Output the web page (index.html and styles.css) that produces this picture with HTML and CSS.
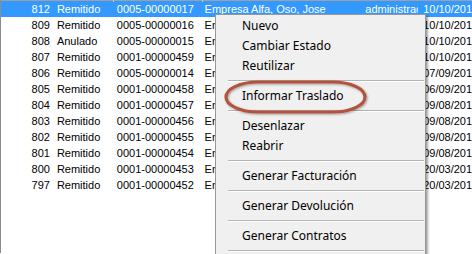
FILE: index.html
```html
<!DOCTYPE html>
<html>
<head>
    <title>Remitos</title>
    <link rel="stylesheet" href="styles.css">
</head>
<body>
    <div class="grid">
        <div class="grid-header">
            <span class="tick t1"></span>
            <span class="tick t2"></span>
        </div>

        <div class="row selected">
            <span class="c-num">812</span><span class="c-estado">Remitido</span><span class="c-nro">0005-00000017</span><span class="c-cliente">Empresa Alfa, Oso, Jose</span><span class="c-user">administrac</span><span class="c-fecha">10/10/201</span>
        </div>
        <div class="row">
            <span class="c-num">809</span><span class="c-estado">Remitido</span><span class="c-nro">0005-00000016</span><span class="c-cliente">Empresa Alfa, Oso, Jose</span><span class="c-user">administrac</span><span class="c-fecha">10/10/201</span>
        </div>
        <div class="row">
            <span class="c-num">808</span><span class="c-estado">Anulado</span><span class="c-nro">0005-00000015</span><span class="c-cliente">Empresa Alfa, Oso, Jose</span><span class="c-user">administrac</span><span class="c-fecha">10/10/201</span>
        </div>
        <div class="row">
            <span class="c-num">807</span><span class="c-estado">Remitido</span><span class="c-nro">0001-00000459</span><span class="c-cliente">Empresa Alfa, Oso, Jose</span><span class="c-user">administrac</span><span class="c-fecha">10/10/201</span>
        </div>
        <div class="row">
            <span class="c-num">806</span><span class="c-estado">Remitido</span><span class="c-nro">0005-00000014</span><span class="c-cliente">Empresa Alfa, Oso, Jose</span><span class="c-user">administrac</span><span class="c-fecha">07/09/201</span>
        </div>
        <div class="row">
            <span class="c-num">805</span><span class="c-estado">Remitido</span><span class="c-nro">0001-00000458</span><span class="c-cliente">Empresa Alfa, Oso, Jose</span><span class="c-user">administrac</span><span class="c-fecha">06/09/201</span>
        </div>
        <div class="row">
            <span class="c-num">804</span><span class="c-estado">Remitido</span><span class="c-nro">0001-00000457</span><span class="c-cliente">Empresa Alfa, Oso, Jose</span><span class="c-user">administrac</span><span class="c-fecha">09/08/201</span>
        </div>
        <div class="row">
            <span class="c-num">803</span><span class="c-estado">Remitido</span><span class="c-nro">0001-00000456</span><span class="c-cliente">Empresa Alfa, Oso, Jose</span><span class="c-user">administrac</span><span class="c-fecha">09/08/201</span>
        </div>
        <div class="row">
            <span class="c-num">802</span><span class="c-estado">Remitido</span><span class="c-nro">0001-00000455</span><span class="c-cliente">Empresa Alfa, Oso, Jose</span><span class="c-user">administrac</span><span class="c-fecha">09/08/201</span>
        </div>
        <div class="row">
            <span class="c-num">801</span><span class="c-estado">Remitido</span><span class="c-nro">0001-00000454</span><span class="c-cliente">Empresa Alfa, Oso, Jose</span><span class="c-user">administrac</span><span class="c-fecha">09/08/201</span>
        </div>
        <div class="row">
            <span class="c-num">800</span><span class="c-estado">Remitido</span><span class="c-nro">0001-00000453</span><span class="c-cliente">Empresa Alfa, Oso, Jose</span><span class="c-user">administrac</span><span class="c-fecha">20/03/201</span>
        </div>
        <div class="row">
            <span class="c-num">797</span><span class="c-estado">Remitido</span><span class="c-nro">0001-00000452</span><span class="c-cliente">Empresa Alfa, Oso, Jose</span><span class="c-user">administrac</span><span class="c-fecha">20/03/201</span>
        </div>
    </div>

    <!-- context menu -->
    <div class="menu">
        <div class="menu-item">Nuevo</div>
        <div class="menu-item">Cambiar Estado</div>
        <div class="menu-item">Reutilizar</div>
        <div class="menu-sep"></div>
        <div class="menu-item">Informar Traslado</div>
        <div class="menu-sep"></div>
        <div class="menu-item">Desenlazar</div>
        <div class="menu-item">Reabrir</div>
        <div class="menu-sep"></div>
        <div class="menu-item">Generar Facturación</div>
        <div class="menu-sep"></div>
        <div class="menu-item">Generar Devolución</div>
        <div class="menu-sep"></div>
        <div class="menu-item">Generar Contratos</div>
        <div class="menu-sep short"></div>
    </div>

    <!-- red highlight drawn over the menu -->
    <svg class="highlight" width="150" height="40" viewBox="0 0 150 40">
        <defs>
            <filter id="soft" x="-10%" y="-30%" width="120%" height="160%">
                <feDropShadow dx="1" dy="1" stdDeviation="1.2" flood-color="#000" flood-opacity="0.35"/>
            </filter>
        </defs>
        <rect x="4" y="4" width="139" height="30" rx="32" ry="15"
              fill="none" stroke="#b4533d" stroke-width="3.2" filter="url(#soft)"/>
    </svg>
</body>
</html>
```

FILE: styles.css
```css
body {
    margin: 0;
    padding: 0;
    background-color: #fff;
    width: 472px;
    height: 254px;
    overflow: hidden;
    position: relative;
}

.grid {
    height: 253px;
    border-left: 1px solid #8c8c8c;
    font-family: "Liberation Sans", Arial, sans-serif;
    font-size: 11px;
    color: #000;
}

.grid-header {
    height: 1px;
    background-color: #a0a0a0;
    position: relative;
}

.tick {
    position: absolute;
    top: 0;
    width: 1px;
    height: 2px;
    background-color: #c8c8c8;
}

.tick.t1 { left: 112px; }
.tick.t2 { left: 201px; }

.row {
    display: flex;
    height: 16px;
    line-height: 16px;
    white-space: nowrap;
}

.row.selected {
    background-color: #3399ff;
    color: #fff;
}

.row span {
    overflow: hidden;
}

.c-num {
    width: 49px;
    text-align: right;
    padding-right: 2px;
}

.c-estado {
    width: 56px;
    padding-left: 5px;
}

.c-nro {
    width: 85px;
    padding-left: 4px;
}

.c-cliente {
    width: 157px;
    padding-left: 3px;
}

.c-user {
    width: 53px;
    padding-left: 4px;
}

.c-fecha {
    padding-left: 5px;
}

/* context menu */
.menu {
    position: absolute;
    left: 215px;
    top: 14px;
    width: 209px;
    height: 239px;
    padding-top: 1px;
    background-color: #f0f0f0;
    border: 1px solid #979797;
    border-bottom: none;
    box-shadow: 2px 2px 2px rgba(0, 0, 0, 0.35);
    font-family: "Noto Sans", "Open Sans", sans-serif;
    font-size: 12px;
    color: #000;
}

.menu-item {
    height: 20px;
    line-height: 20px;
    padding-left: 26px;
}

.menu-sep {
    height: 10px;
    margin: 0 1px 0 12px;
    position: relative;
}

.menu-sep.short {
    height: 8px;
}

.menu-sep::after {
    content: "";
    position: absolute;
    left: 0;
    right: 0;
    top: 4px;
    border-top: 1px solid #b4b4b4;
    border-bottom: 1px solid #fff;
}

.highlight {
    position: absolute;
    left: 222px;
    top: 78px;
}
```
